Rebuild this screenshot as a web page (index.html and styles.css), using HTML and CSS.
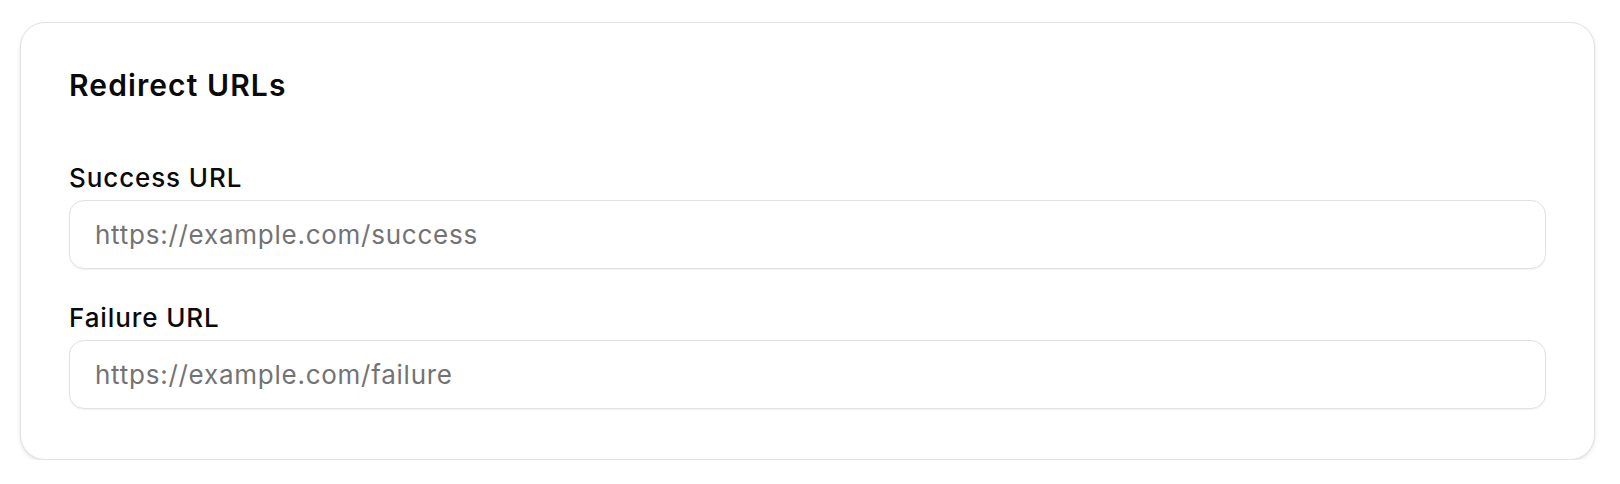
FILE: index.html
```html
<!DOCTYPE html>
<html>
<head>
<meta charset="utf-8">
<link rel="stylesheet" href="styles.css">
</head>
<body>
<section class="card">
  <h2 class="title">Redirect URLs</h2>
  <div class="fields">
    <div class="field">
      <label class="label" for="s">Success URL</label>
      <input class="input" id="s" type="text" placeholder="https://example.com/success">
    </div>
    <div class="field">
      <label class="label" for="f">Failure URL</label>
      <input class="input" id="f" type="text" placeholder="https://example.com/failure">
    </div>
  </div>
</section>
</body>
</html>
```

FILE: styles.css
```css
* { box-sizing: border-box; }
html, body { margin: 0; background: #ffffff; }
body {
  padding: 22px 25px 0 20px;
  font-family: Inter, "Liberation Sans", sans-serif;
  color: #0a0a0a;
}
.card {
  border: 1px solid #e3e3e3;
  border-radius: 25px;
  background: #fff;
  box-shadow: 0 2px 5px rgba(0,0,0,0.08), 0 1px 2px rgba(0,0,0,0.05);
  padding: 46px 48px 50px 48px;
}
.title {
  margin: 0;
  font-size: 30px;
  line-height: 32px;
  font-weight: 600;
  letter-spacing: 1.1px;
}
.fields {
  display: flex;
  flex-direction: column;
  gap: 33px;
  margin-top: 61px;
}
.field {
  display: flex;
  flex-direction: column;
  gap: 6px;
}
.label {
  font-size: 26px;
  line-height: 32px;
  font-weight: 500;
  letter-spacing: 0.9px;
}
.input {
  height: 69px;
  border: 1px solid #e2e2e2;
  border-radius: 15px;
  padding: 0 25px;
  font-family: inherit;
  font-size: 26px;
  letter-spacing: 0.75px;
  color: #0a0a0a;
  background: #fff;
  box-shadow: 0 1px 2px rgba(0,0,0,0.06);
  outline: none;
}
.input::placeholder { color: #737373; }
```
